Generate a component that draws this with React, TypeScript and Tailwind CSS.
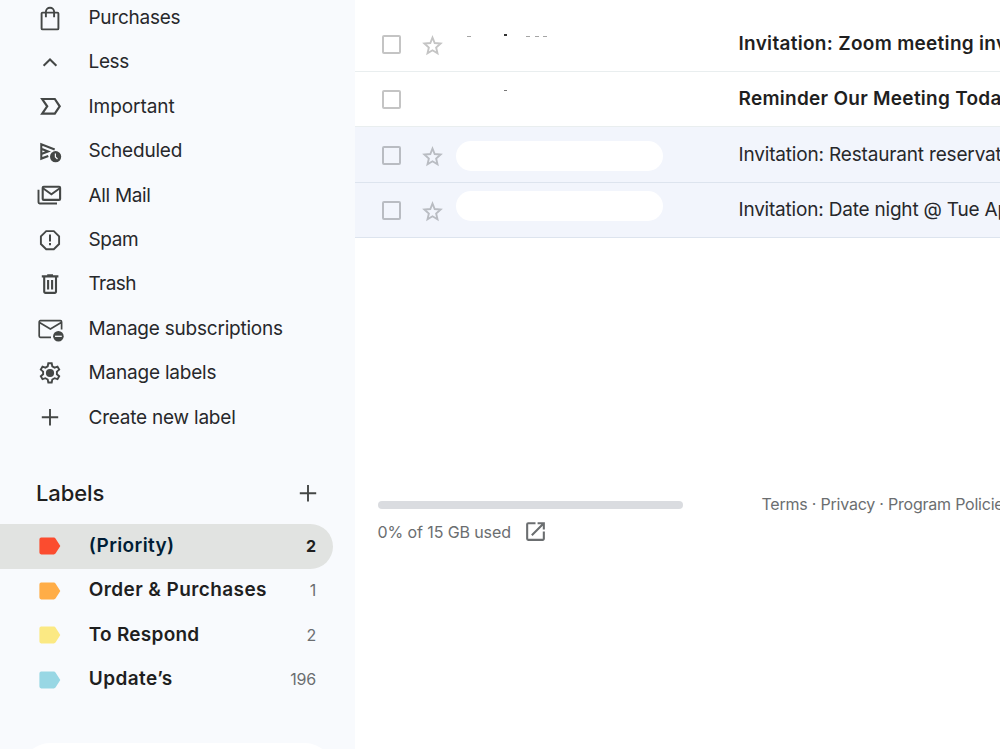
import type { ReactNode } from "react";
import { MdOpenInNew } from "react-icons/md";

const Icon = ({ children }: { children: ReactNode }) => (
  <svg width="30" height="30" viewBox="0 0 30 30" fill="none" stroke="#444746" strokeWidth="1.9" className="shrink-0">
    {children}
  </svg>
);

const PlusIcon = () => <Icon><path d="M15 7v16.4M6.8 15.2h16.4" /></Icon>;

const StarIcon = ({ color }: { color: string }) => (
  <svg width="25" height="25" viewBox="0 0 24 24" fill="none" stroke={color} strokeWidth="1.8">
    <path d="M12 4.3l2.1 5.3 5.7.5-4.3 3.8 1.3 5.6-4.8-2.9-4.8 2.9 1.3-5.6-4.3-3.8 5.7-.5z" />
  </svg>
);

const menu = [
  {
    name: "Purchases",
    style: "tracking-[-0.26px]",
    icon: <Icon><rect x="6.6" y="9.6" width="16.8" height="16.8" rx="1" /><path d="M10.9 14.3V8.8a4.1 4.1 0 0 1 8.2 0v5.5" /></Icon>,
  },
  {
    name: "Less",
    style: "tracking-[-0.35px]",
    icon: <Icon><path d="M8.6 18.8l6.4-6.3 6.4 6.3" strokeWidth="2" /></Icon>,
  },
  {
    name: "Important",
    style: "tracking-[-0.05px]",
    icon: <Icon><path d="M7.2 8h12.6l4.9 7.3-4.9 7.3H7.2l5-7.3z" strokeWidth="2.2" /></Icon>,
  },
  {
    name: "Scheduled",
    style: "tracking-[-0.22px]",
    icon: (
      <Icon>
        <path d="M13.3 19.9l-7 2.7V8.3l13.4 5.3M6.3 12.8l6.7 2.6-6.7 2.5" strokeWidth="2.1" />
        <circle cx="20.6" cy="20.7" r="5.6" fill="#444746" stroke="none" />
        <path d="M20.4 17.4v3.6l2.1 2" stroke="#f8fafd" strokeWidth="1.2" />
      </Icon>
    ),
  },
  {
    name: "All Mail",
    style: "tracking-[-0.32px]",
    icon: (
      <Icon>
        <rect x="7.7" y="6.7" width="17.4" height="13.2" rx="1" strokeWidth="2.1" />
        <path d="M8 8.3l8.4 6 8.4-6M3.5 9.8v12.5a1.2 1.2 0 0 0 1.2 1.2H22" />
      </Icon>
    ),
  },
  {
    name: "Spam",
    style: "tracking-[-0.4px]",
    icon: (
      <Icon>
        <path d="M11.2 6.1h7.6l5.3 5.3V19l-5.3 5.2h-7.6L5.9 19v-7.6z" />
        <path d="M15 9.6v6.8M15 18v2.2" strokeWidth="2" />
      </Icon>
    ),
  },
  {
    name: "Trash",
    style: "tracking-[-0.6px]",
    icon: <Icon><path d="M6.8 7.4h16.6M12.2 6.4h5.8M9.2 7.4v15.3a1.2 1.2 0 0 0 1.2 1.2h9.4a1.2 1.2 0 0 0 1.2-1.2V7.4M13.1 10.9v9.6M17.1 10.9v9.6" strokeWidth="2.1" /></Icon>,
  },
  {
    name: "Manage subscriptions",
    style: "tracking-[-0.22px]",
    icon: (
      <Icon>
        <path d="M16 23.3H5.4a1.2 1.2 0 0 1-1.2-1.2V7.9a1.2 1.2 0 0 1 1.2-1.2h20a1.2 1.2 0 0 1 1.2 1.2v7.5M4.5 8.6l10.9 6.3L26.2 8.6" strokeWidth="1.7" />
        <circle cx="23.4" cy="22.3" r="5.3" fill="#444746" stroke="none" />
        <path d="M20 22.3h6.8" stroke="#f8fafd" strokeWidth="1.3" />
      </Icon>
    ),
  },
  {
    name: "Manage labels",
    style: "tracking-[-0.2px]",
    icon: (
      <Icon>
        <path d="M13.3 5.3h3.4l.6 3 2.3 1.3 2.9-1 1.7 3-2.3 2v2.6l2.3 2-1.7 3-2.9-1-2.3 1.3-.6 3h-3.4l-.6-3-2.3-1.3-2.9 1-1.7-3 2.3-2v-2.6l-2.3-2 1.7-3 2.9 1 2.3-1.3z" />
        <circle cx="15" cy="15" r="4.1" fill="#444746" stroke="none" />
      </Icon>
    ),
  },
  { name: "Create new label", style: "tracking-[-0.22px]", icon: <PlusIcon /> },
];

const labels = [
  { name: "(Priority)", count: 2, color: "#fb4c2f", active: true, style: "tracking-[0.38px]" },
  { name: "Order & Purchases", count: 1, color: "#ffad47", active: false, style: "tracking-[0.4px]" },
  { name: "To Respond", count: 2, color: "#fbe983", active: false, style: "tracking-[0.25px]" },
  { name: "Update’s", count: 196, color: "#98d7e4", active: false, style: "tracking-[0.4px]" },
];

const mails = [
  { subject: "Invitation: Zoom meeting invitation", read: false, star: true, style: "tracking-[0.3px]" },
  { subject: "Reminder Our Meeting Today", read: false, star: false, style: "tracking-[0.27px]" },
  { subject: "Invitation: Restaurant reservation", read: true, star: true, style: "tracking-[-0.17px]" },
  { subject: "Invitation: Date night @ Tue Apr", read: true, star: true, style: "tracking-[-0.2px]" },
];

const Sidebar = () => {
  return (
    <aside className="w-[355px] h-full shrink-0 bg-[#f8fafd] flex flex-col overflow-hidden">
      <nav className="-mt-[4.7px] shrink-0">
        {menu.map((item) => (
          <div key={item.name} className="h-[44.45px] pl-[35px] flex items-center gap-[23.5px]">
            {item.icon}
            <span className={`text-[19px] leading-6 mt-[0.5px] text-[#27282b] ${item.style}`}>{item.name}</span>
          </div>
        ))}
      </nav>
      <div className="mt-[37px] h-8 pl-[36px] pr-8 flex items-center justify-between shrink-0">
        <h2 className="text-[22px] font-medium text-[#1f1f1f] tracking-[-0.1px] mt-0.5">Labels</h2>
        <PlusIcon />
      </div>
      <div className="mt-[15.5px] shrink-0">
        {labels.map((label) => (
          <div
            key={label.name}
            className={`h-[44.4px] w-[333px] pl-[35px] pr-[17px] flex items-center rounded-r-full ${label.active ? "bg-[#e1e3e1]" : ""}`}
          >
            <svg width="30" height="30" viewBox="0 0 30 30" fill={label.color} className="shrink-0">
              <path d="M6.2 6.6h12.7q1 0 1.6.8l4.8 7.6-4.8 7.6q-.6.8-1.6.8H6.2q-1.8 0-1.8-1.8V8.4q0-1.8 1.8-1.8z" />
            </svg>
            <span className={`ml-[23.8px] flex-1 text-[19px] leading-6 -mt-px font-semibold ${label.active ? "text-[#001d35]" : "text-[#1f1f1f]"} ${label.style}`}>
              {label.name}
            </span>
            <span className={label.active ? "text-[16px] font-bold text-[#1f1f1f]" : "text-[16px] -mt-px text-[#6b6e70] tracking-[-0.2px]"}>{label.count}</span>
          </div>
        ))}
      </div>
      <div className="mt-[41px] ml-[22px] w-[311px] h-20 shrink-0 rounded-[28px] bg-white"></div>
    </aside>
  );
};

const App = () => {
  return (
    <div className="w-[1000px] h-[749px] flex overflow-hidden bg-white font-['Inter',sans-serif] whitespace-nowrap">
      <Sidebar />
      <main className="flex-1 min-w-0 pt-4 overflow-hidden">
        <div className="relative">
          {mails.map((mail) => (
            <div
              key={mail.subject}
              className={`h-[55.5px] pl-[27px] flex items-center border-b ${mail.read ? "bg-[#f2f5fc] border-[#dde4ee]" : "border-[#e9eeef]"}`}
            >
              <div className={`size-[19px] mt-[1.5px] shrink-0 rounded-[2px] border-2 ${mail.read ? "border-[#b9bcc2]" : "border-[#c4c4c4]"}`}></div>
              <div className="w-[26px] ml-[19.2px] mt-1 shrink-0">
                {mail.star && <StarIcon color={mail.read ? "#b9bcc2" : "#c4c4c4"} />}
              </div>
              <span className={`ml-[292.3px] mt-px text-[19px] leading-6 ${mail.read ? "text-[#27282b]" : "font-semibold text-[#1f1f1f]"} ${mail.style}`}>
                {mail.subject}
              </span>
            </div>
          ))}
          {/* hidden sender names */}
          <div className="absolute left-[101px] top-[125px] w-[207px] h-[30px] rounded-full bg-white"></div>
          <div className="absolute left-[101px] top-[175px] w-[207px] h-[30px] rounded-full bg-white"></div>
          <div className="absolute left-[112px] top-[20px] w-[4px] h-px bg-[#a5a5a5]"></div>
          <div className="absolute left-[149px] top-[18px] w-[3px] h-[2px] bg-[#333333]"></div>
          <div className="absolute left-[171px] top-[20px] w-[4px] h-px bg-[#a5a5a5]"></div>
          <div className="absolute left-[180px] top-[20px] w-[4px] h-px bg-[#a5a5a5]"></div>
          <div className="absolute left-[188px] top-[20px] w-[4px] h-px bg-[#a5a5a5]"></div>
          <div className="absolute left-[149px] top-[74px] w-[3px] h-px bg-[#777777]"></div>
        </div>
        <footer className="mt-[262px] pl-[22.5px] flex text-[#6b6e70] text-[16px]">
          <div className="w-[305px] shrink-0">
            <div className="h-2 mt-[1px] rounded-full bg-[#dadce0]"></div>
            <div className="flex items-center mt-[10px]">
              <span className="tracking-[-0.1px] mt-px">0% of 15 GB used</span>
              <MdOpenInNew size={25} className="ml-3" />
            </div>
          </div>
          <span className="ml-[79px] -mt-2 tracking-[-0.22px]">Terms · Privacy · Program Policies</span>
        </footer>
      </main>
    </div>
  );
};

export default App;
